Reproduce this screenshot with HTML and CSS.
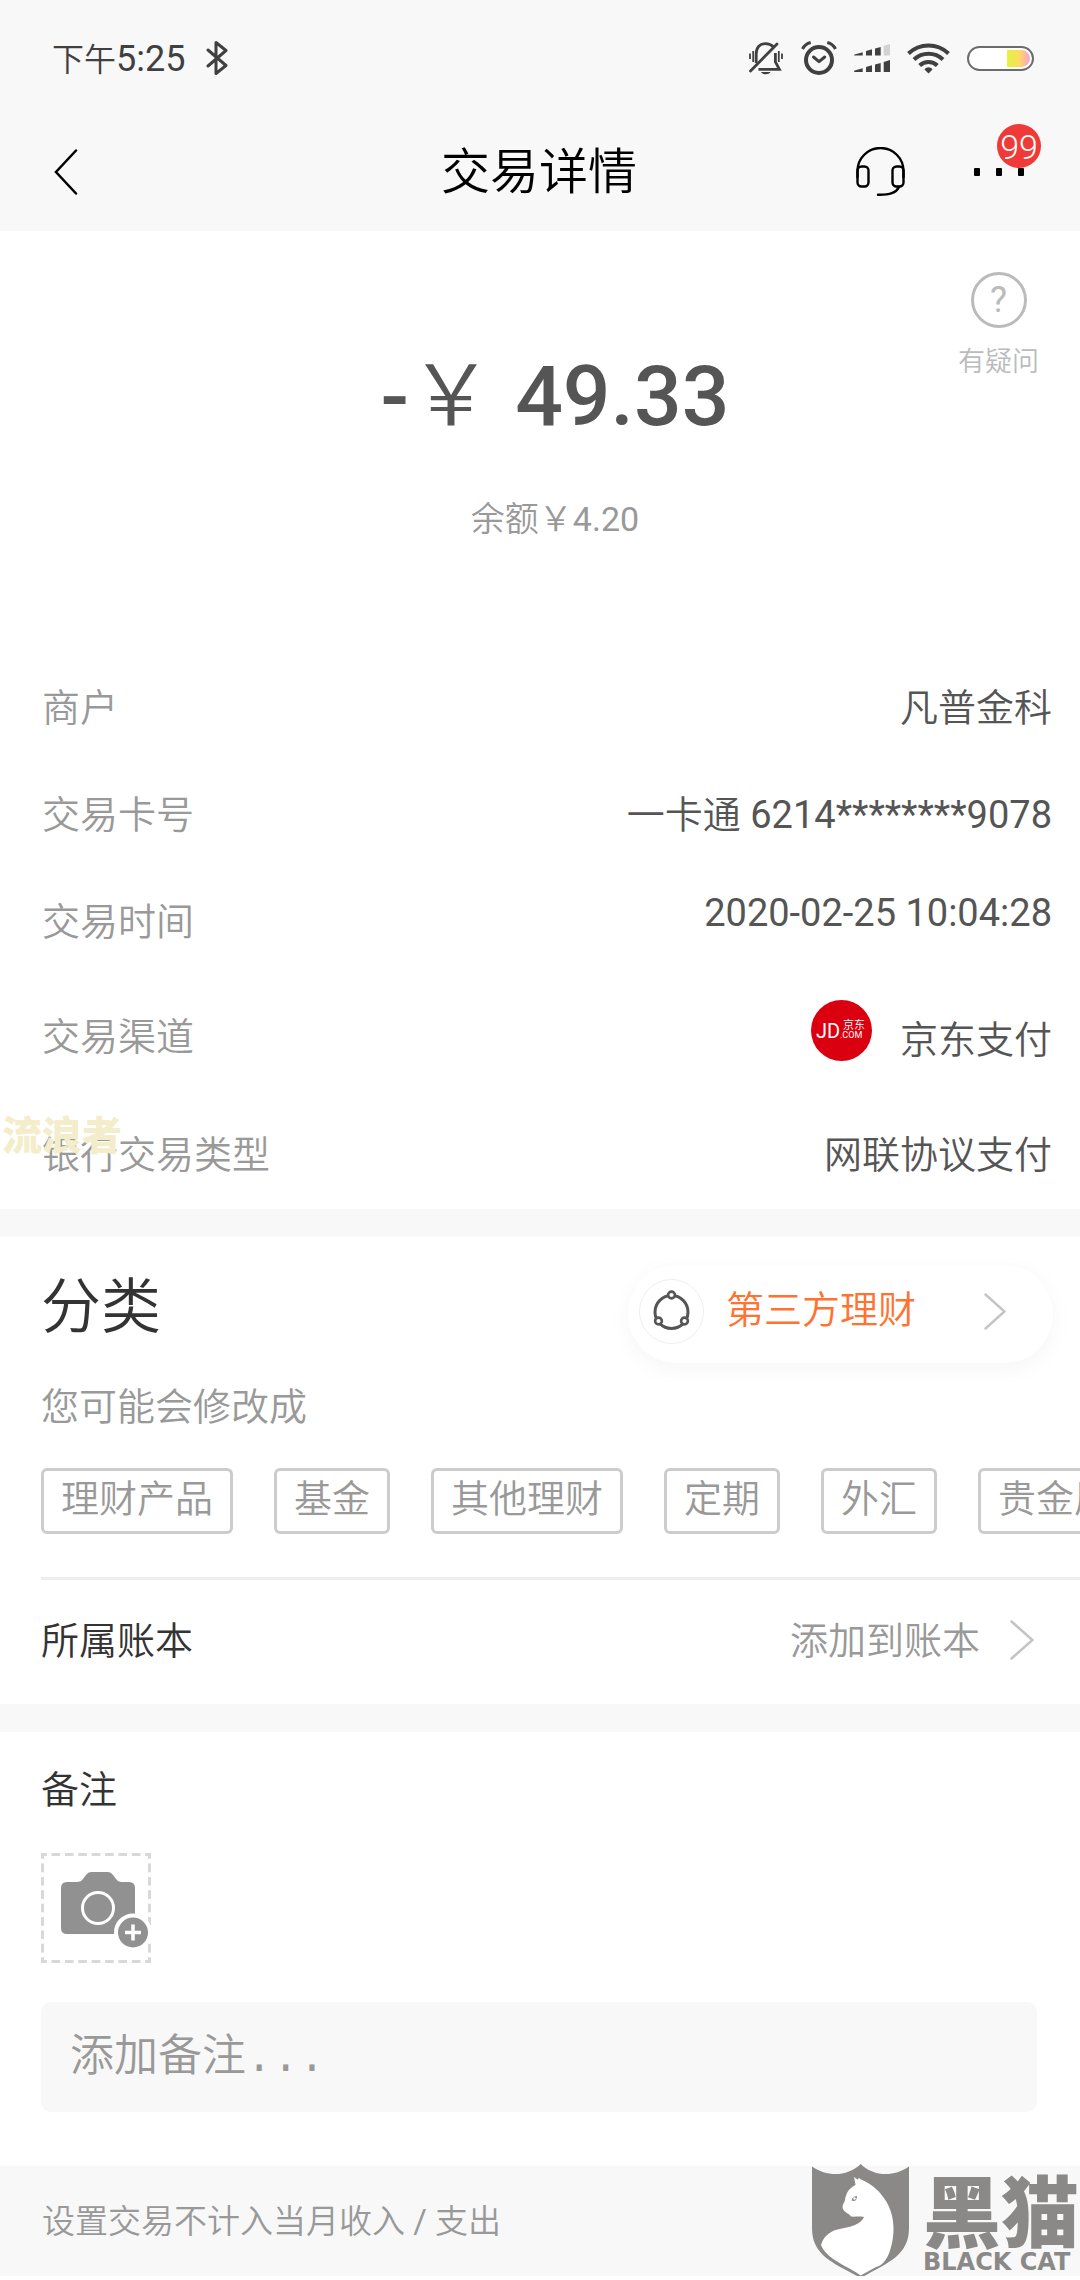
FILE: index.html
```html
<!DOCTYPE html>
<html lang="zh-CN">
<head>
    <meta charset="UTF-8">
    <meta name="viewport" content="width=device-width, initial-scale=1.0">
    <title>交易详情</title>
    <link rel="stylesheet" href="styles.css">
</head>
<body>
    <div class="status-bar">
        <div class="status-left">
            <span class="clock">下午<span class="clock-digits">5:25</span></span>
            <svg width="22" height="34" viewBox="0 0 22 34" fill="none" stroke="#404040" stroke-width="3" stroke-linejoin="round" stroke-linecap="round">
                <path d="M2 9l18 15.5-10 8V1.5l10 8L2 25"/>
            </svg>
        </div>
        <div class="status-right">
            <svg width="35" height="33" viewBox="0 0 35 33" fill="none" stroke="#404040" stroke-width="2.8">
                <path d="M7.2 21V12C7.2 5 11 1.6 16.5 1.6c3.4 0 6 1.2 7.8 3.2M26.4 11v9l4 7.4H9.5"/>
                <path d="M1.5 29L28 2" stroke-width="2.8" stroke-linecap="round"/>
                <path d="M1 11.5v5.5M4.2 9v11M29.8 9v11M33 11.5v5.5" stroke-width="1.8"/>
                <path d="M12 30h9.5c-1.5 3-8 3-9.5 0z" fill="#404040" stroke="none"/>
            </svg>
            <svg width="36" height="34" viewBox="0 0 36 34" fill="none" stroke="#404040">
                <circle cx="18" cy="19" r="13" stroke-width="4"/>
                <path d="M12.5 16l5.5 4.7 5.7-4.7" stroke-width="3" stroke-linecap="round" stroke-linejoin="round"/>
                <path d="M1.5 8C3 5 6 2.5 9.7 1.5M34.5 8C33 5 30 2.5 26.3 1.5" stroke-width="3"/>
            </svg>
            <svg width="36" height="28" viewBox="0 0 36 28" fill="#404040">
                <path d="M0 11.5l.5-1 8.2-2.2v3.2zM12 11.5V7l6-1.7v6.2zM21 11.5V4.5L26.7 3v8.5z"/>
                <path d="M29.7 11.5V1.7L36 0v11.5z" fill="#d2d2d2"/>
                <path d="M0 28l.5-1.5 8.2-2.2V28zM12 28v-5l6-1.8V28zM21 28v-7.5l5.7-1.5v9zM29.7 28V18L36 16v12z"/>
            </svg>
            <svg width="43" height="31" viewBox="0 0 43 31" fill="none" stroke="#404040" stroke-width="4">
                <path d="M1.5 10.5a29 29 0 0 1 40 0M7 16.5a21 21 0 0 1 29 0M12.7 22.5a12.5 12.5 0 0 1 17.6 0"/>
                <path d="M17.5 26.5c2-3 6-3 8 0L21.5 30.5z" fill="#404040" stroke="none"/>
            </svg>
            <svg width="67" height="25" viewBox="0 0 67 25">
                <defs>
                    <linearGradient id="charge">
                        <stop offset="0" stop-color="#e2f53d"/>
                        <stop offset=".55" stop-color="#ffd962"/>
                        <stop offset="1" stop-color="#f8a0d6"/>
                    </linearGradient>
                </defs>
                <rect x="1" y="1" width="65" height="23" rx="11.5" fill="#fff" stroke="#6c6c6c" stroke-width="2"/>
                <path d="M40 4h14.5a8.5 8.5 0 0 1 0 17H40z" fill="url(#charge)"/>
            </svg>
        </div>
    </div>

    <header class="nav-bar">
        <button class="icon-button" type="button" aria-label="返回">
            <svg width="24" height="46" viewBox="0 0 24 46" fill="none" stroke="#000" stroke-width="2.5" stroke-linecap="round">
                <path d="M22 1.5L2 23l20 21.5"/>
            </svg>
        </button>
        <h1 class="nav-title">交易详情</h1>
        <div class="nav-actions">
            <button class="icon-button" type="button" aria-label="客服">
                <svg width="49" height="50" viewBox="0 0 49 50" fill="none" stroke="#000" stroke-width="2.4" stroke-linecap="round">
                    <path d="M1.5 30v-6a23 23 0 0 1 46 0v6"/>
                    <rect x="1.5" y="19.5" width="11" height="20" rx="4"/>
                    <rect x="36.5" y="19.5" width="11" height="20" rx="4"/>
                    <path d="M43 40C40 46 34 48 22 47.8"/>
                </svg>
            </button>
            <button class="icon-button more-button" type="button" aria-label="更多">
                <svg width="50" height="8" viewBox="0 0 50 8">
                    <rect x="0" y="0" width="6" height="8" rx="1"/>
                    <rect x="22" y="0" width="6" height="8" rx="1"/>
                    <rect x="44" y="0" width="6" height="8" rx="1"/>
                </svg>
                <span class="badge">99</span>
            </button>
        </div>
    </header>

    <main>
        <section class="summary">
            <div class="summary-main">
                <p class="amount"><span class="sign">-</span><span class="currency">￥</span><span class="number">49.33</span></p>
                <p class="balance">余额￥4.20</p>
            </div>
            <button class="help" type="button">
                <span class="help-mark">?</span>
                <span>有疑问</span>
            </button>
        </section>

        <section class="details">
            <dl class="detail-list">
                <div class="detail-row"><dt>商户</dt><dd>凡普金科</dd></div>
                <div class="detail-row"><dt>交易卡号</dt><dd>一卡通 6214********9078</dd></div>
                <div class="detail-row"><dt>交易时间</dt><dd>2020-02-25 10:04:28</dd></div>
                <div class="detail-row channel-row">
                    <dt>交易渠道</dt>
                    <dd>
                        <svg width="61" height="61" viewBox="0 0 61 61" fill="#fff">
                            <circle cx="30.5" cy="30.5" r="30.5" fill="#da000f"/>
                            <text x="5" y="38" font-size="20">JD</text>
                            <text x="32" y="29" font-size="11">京东</text>
                            <text x="29" y="38" font-size="9">.COM</text>
                        </svg>
                        <span>京东支付</span>
                    </dd>
                </div>
                <div class="detail-row"><dt>银行交易类型</dt><dd>网联协议支付</dd></div>
            </dl>
            <span class="user-mark">流浪者</span>
        </section>

        <section class="category">
            <div class="category-head">
                <h2>分类</h2>
                <button class="category-pill" type="button">
                    <svg width="65" height="65" viewBox="0 0 65 65" fill="none" stroke="#555">
                        <circle cx="32.5" cy="32.5" r="32" stroke="#eee"/>
                        <circle cx="32.5" cy="33" r="16.5" stroke-width="3"/>
                        <g fill="#fff" stroke-width="2.6">
                            <circle cx="32.5" cy="16" r="3.4"/>
                            <circle cx="19.5" cy="42" r="3.4"/>
                            <circle cx="45.5" cy="42" r="3.4"/>
                        </g>
                    </svg>
                    <span>第三方理财</span>
                    <svg class="chevron" width="22" height="37" viewBox="0 0 22 37"><path d="M1.5 1.5l19 17-19 17"/></svg>
                </button>
            </div>
            <p class="category-hint">您可能会修改成</p>
            <div class="tags">
                <button type="button">理财产品</button>
                <button type="button">基金</button>
                <button type="button">其他理财</button>
                <button type="button">定期</button>
                <button type="button">外汇</button>
                <button type="button">贵金属</button>
            </div>
            <div class="book-row">
                <span>所属账本</span>
                <button class="book-button" type="button">
                    <span>添加到账本</span>
                    <svg class="chevron" width="24" height="40" viewBox="0 0 24 40"><path d="M1.5 1.5L22.5 20l-21 18.5"/></svg>
                </button>
            </div>
        </section>

        <section class="remark">
            <label for="remark">备注</label>
            <button class="photo-button" type="button" aria-label="添加照片">
                <svg width="110" height="110" viewBox="0 0 110 110">
                    <rect x="1.5" y="1.5" width="107" height="107" pathLength="448" fill="none" stroke="#d8d8d8" stroke-width="3" stroke-dasharray="9 5" stroke-dashoffset="4.5"/>
                    <path d="M26 29h10q4 0 6-3l3-4q2-3 5-3h17q3 0 5 3l3 4q2 3 5 3h8q6 0 6 6v40q0 6-6 6H26q-6 0-6-6V35q0-6 6-6z" fill="#919191"/>
                    <circle cx="57" cy="55" r="15.5" fill="none" stroke="#fff" stroke-width="3"/>
                    <circle cx="92" cy="79.5" r="17" fill="#919191" stroke="#fff" stroke-width="4"/>
                    <path d="M84 79.5h16M92 71.5v16" stroke="#fff" stroke-width="3.5"/>
                </svg>
            </button>
            <input class="remark-input" id="remark" type="text" placeholder="添加备注...">
        </section>
    </main>

    <footer class="page-footer">
        <p>设置交易不计入当月收入 / 支出</p>
        <div class="black-cat">
            <svg width="97" height="114" viewBox="0 0 97 114">
                <path d="M0 2.5C15 13 35 13 48.7 0 62 13 82 13 97 2.5V64c0 28-22 35-48.3 50C22 99 0 92 0 64z" fill="#8b8888"/>
                <path d="M42 13l3.5 2.5 1.5-1.5 2 1.5C61 20 69 29 74 37c8 13 9 29 6 42-3 14-8 22-16 24l-15.3 8.5C36 102 15 96 9 81c2-7 6-11 12-14 9-4 26-3 31-14-5-1-9 0-13-.5-2-3.5-8-4-8.500-9.500 0-3 2-4 2.500-7 1-7 4-12 10.500-15z" fill="#fff"/>
                <path d="M39.5 36.5c1-3.500 3-4.500 5.500-4.500 0 4-2 6-5.500 4.500z" fill="#8b8888"/>
                <circle cx="42.5" cy="34.5" r="1.2" fill="#fff"/>
            </svg>
            <div class="black-cat-name">
                <span class="name-zh">黑猫</span>
                <span class="name-en">BLACK CAT</span>
            </div>
        </div>
    </footer>
</body>
</html>
```
FILE: styles.css
```css
* {
    box-sizing: border-box;
}
body {
    margin: 0;
    background-color: #fff;
    color: #555;
    font-family: Roboto, "Noto Sans CJK SC DemiLight", "Noto Sans CJK SC", sans-serif;
    font-size: 38px;
    font-weight: 400;
    overflow-x: hidden;
}
h1, h2, p, dl, dd {
    margin: 0;
    font-weight: inherit;
}
svg {
    display: block;
    flex: none;
}
button {
    padding: 0;
    border: none;
    background: none;
    color: inherit;
    font: inherit;
    cursor: pointer;
}

/* status bar */
.status-bar {
    display: flex;
    justify-content: space-between;
    align-items: center;
    height: 116px;
    padding: 0 46px 0 52px;
    background-color: #f8f8f8;
    color: #404040;
}
.status-left {
    display: flex;
    align-items: center;
    gap: 21px;
}
.status-right {
    display: flex;
    align-items: center;
    gap: 17px;
}
.clock {
    padding-top: 2px;
    font-size: 32px;
    line-height: 40px;
}
.clock-digits {
    font-size: 36px;
}

/* title bar */
.nav-bar {
    display: grid;
    grid-template-columns: 1fr auto 1fr;
    align-items: center;
    height: 115px;
    padding: 0 56px 4px 54px;
    background-color: #f8f8f8;
    color: #000;
}
.icon-button {
    justify-self: start;
}
.nav-title {
    padding-top: 2px;
    font-size: 49px;
    line-height: 60px;
}
.nav-actions {
    display: flex;
    justify-content: flex-end;
    align-items: center;
    gap: 69px;
}
.more-button {
    position: relative;
}
.badge {
    position: absolute;
    right: -17px;
    bottom: 8px;
    width: 44px;
    height: 44px;
    border-radius: 50%;
    background-color: #f03a37;
    color: #fff;
    font-size: 34px;
    font-weight: 300;
    line-height: 46px;
    text-align: center;
}

/* amount */
.summary {
    display: grid;
    grid-template-columns: 1fr auto 1fr;
    padding: 41px 13px 0 43px;
}
.summary-main {
    grid-column: 2;
    padding-top: 75px;
    text-align: center;
}
.amount {
    display: flex;
    justify-content: center;
    align-items: baseline;
    font-size: 84px;
    font-weight: 500;
    line-height: 100px;
}
.currency {
    font-weight: 400;
}
.number {
    margin-left: 22px;
}
.balance {
    margin-top: 48px;
    color: #999;
    font-size: 34px;
    line-height: 48px;
}
.help {
    justify-self: end;
    align-self: start;
    display: flex;
    flex-direction: column;
    align-items: center;
    gap: 14px;
    margin-right: 28px;
    color: #bbb;
    font-size: 27px;
    line-height: 40px;
}
.help-mark {
    width: 56px;
    height: 56px;
    border: 3px solid #bbb;
    border-radius: 50%;
    font-size: 36px;
    line-height: 50px;
}

/* transaction details */
.details {
    position: relative;
    padding: 134px 28px 30px 42px;
}
.detail-list {
    display: flex;
    flex-direction: column;
    gap: 52px;
}
.detail-row {
    display: flex;
    justify-content: space-between;
    align-items: flex-start;
}
.detail-row dt {
    color: #999;
}
.channel-row {
    padding: 2px 0 8px;
}
.channel-row dt {
    padding-top: 6px;
}
.channel-row dd {
    display: flex;
    gap: 28px;
}
.channel-row dd span {
    padding-top: 9px;
}
.user-mark {
    position: absolute;
    left: 2px;
    bottom: 47px;
    color: #f3edcb;
    font-family: "Noto Sans CJK SC", sans-serif;
    font-size: 40px;
    font-weight: 900;
    line-height: 58px;
}

/* category */
.category {
    padding-left: 41px;
    border-top: 28px solid #f8f8f8;
    border-bottom: 28px solid #f8f8f8;
}
.category-head {
    display: flex;
    justify-content: space-between;
    align-items: center;
    padding: 28px 27px 0 0;
}
.category-head h2 {
    padding-bottom: 12px;
    color: #333;
    font-size: 60px;
    line-height: 80px;
}
.category-pill {
    display: flex;
    align-items: center;
    height: 98px;
    padding: 0 47px 6px 11px;
    border-radius: 49px;
    box-shadow: 0 6px 24px rgba(0, 0, 0, 0.04);
    color: #ff7230;
}
.category-pill span {
    margin: 0 68px 0 22px;
    padding-bottom: 10px;
}
.chevron {
    fill: none;
    stroke: #c4c4c4;
    stroke-width: 2.5;
    stroke-linecap: round;
}
.category-hint {
    margin-top: 16px;
    color: #999;
    line-height: 56px;
}
.tags {
    display: flex;
    gap: 41px;
    margin-top: 33px;
    overflow: hidden;
    color: #999;
}
.tags button {
    flex: none;
    height: 66px;
    padding: 0 17px 4px;
    border: 3px solid #ccc;
    border-radius: 6px;
    line-height: 56px;
}
.book-row {
    display: flex;
    justify-content: space-between;
    align-items: center;
    height: 127px;
    margin-top: 43px;
    padding: 0 46px 4px 0;
    border-top: 3px solid #eee;
    color: #333;
}
.book-row span {
    padding-bottom: 6px;
}
.book-button {
    display: flex;
    align-items: center;
    gap: 30px;
    color: #999;
}

/* remark */
.remark {
    display: flex;
    flex-direction: column;
    align-items: flex-start;
    padding: 30px 43px 54px 41px;
}
.remark label {
    color: #333;
    line-height: 56px;
}
.photo-button {
    margin: 35px 0 39px;
}
.remark-input {
    width: 100%;
    height: 110px;
    padding: 4px 29px 0;
    border: none;
    border-radius: 10px;
    background-color: #f8f8f8;
    color: #555;
    font-family: "Liberation Mono", "Noto Sans CJK SC DemiLight", "Noto Sans CJK SC", monospace;
    font-size: 44px;
}
.remark-input::placeholder {
    color: #999;
}

/* footer */
.page-footer {
    position: relative;
    height: 110px;
    padding: 32px 42px;
    background-color: #f8f8f8;
    color: #999;
    font-size: 33px;
    line-height: 48px;
}
.black-cat {
    position: absolute;
    right: 1px;
    top: -2px;
    display: flex;
    align-items: center;
    gap: 14px;
    color: #8b8888;
}
.black-cat-name {
    display: flex;
    flex-direction: column;
    padding-top: 4px;
}
.name-zh {
    font-family: "Noto Sans CJK SC", sans-serif;
    font-size: 78px;
    font-weight: 900;
    line-height: 78px;
}
.name-en {
    font-family: "DejaVu Sans", sans-serif;
    font-size: 24px;
    font-weight: bold;
    line-height: 30px;
}
```
